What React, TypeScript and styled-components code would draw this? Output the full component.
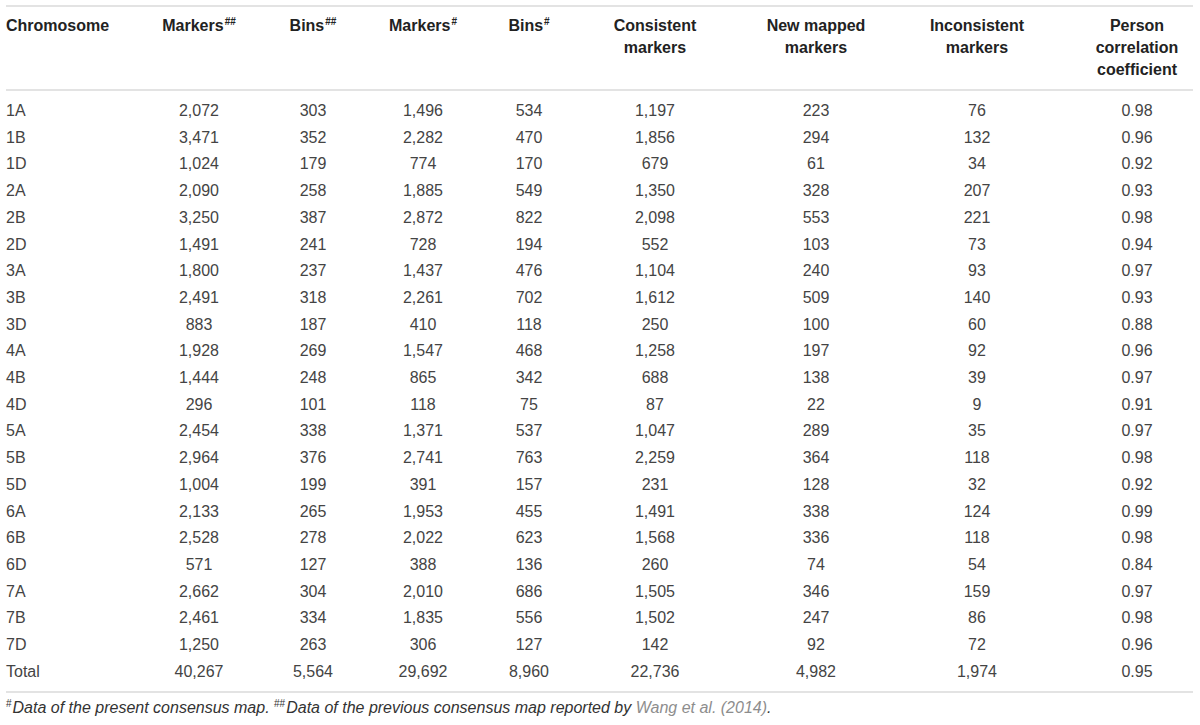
import React from "react";
import styled, { createGlobalStyle } from "styled-components";

const Global = createGlobalStyle`
  html, body { margin: 0; padding: 0; background: #ffffff; }
  body { font-family: "Liberation Sans", Arial, sans-serif; }
`;

const Page = styled.div`
  padding: 5px 7px 0 6px;
  width: 1187px;
`;

const Table = styled.table`
  width: 1187px;
  table-layout: fixed;
  border-collapse: collapse;
  border-top: 2px solid #e3e3e3;
  border-bottom: 2px solid #e3e3e3;
  font-size: 16px;
`;

const HeadRow = styled.tr`
  border-bottom: 2px solid #e3e3e3;
`;

const Th = styled.th<{ $left?: boolean }>`
  padding: 8px 0 8px;
  line-height: 22px;
  font-weight: bold;
  color: #222;
  vertical-align: top;
  white-space: nowrap;
  text-align: ${(p) => (p.$left ? "left" : "center")};
`;

const Sup = styled.sup`
  font-size: 10px;
  line-height: 0;
  vertical-align: 6px;
  margin-left: 1px;
`;

const Row = styled.tr<{ $first?: boolean; $last?: boolean }>`
  & > td {
    padding-top: ${(p) => (p.$first ? 11 : 4)}px;
    padding-bottom: ${(p) => (p.$last ? 10 : 4)}px;
  }
`;

const Td = styled.td<{ $left?: boolean }>`
  padding: 4px 0;
  line-height: 18.7px;
  color: #444;
  white-space: nowrap;
  text-align: ${(p) => (p.$left ? "left" : "center")};
`;

const Note = styled.p`
  margin: 5px 0 0;
  font-size: 16px;
  line-height: 20px;
  font-style: italic;
  color: #333;
`;

const NoteSup = styled.sup`
  font-size: 10px;
  line-height: 0;
  vertical-align: 6px;
  font-style: normal;
  margin-right: 1px;
`;

const Cite = styled.span`
  color: #8d8d8d;
`;

const widths = [105, 176, 52, 168, 44, 208, 114, 208, 112];

const rows: string[][] = [
  ["1A", "2,072", "303", "1,496", "534", "1,197", "223", "76", "0.98"],
  ["1B", "3,471", "352", "2,282", "470", "1,856", "294", "132", "0.96"],
  ["1D", "1,024", "179", "774", "170", "679", "61", "34", "0.92"],
  ["2A", "2,090", "258", "1,885", "549", "1,350", "328", "207", "0.93"],
  ["2B", "3,250", "387", "2,872", "822", "2,098", "553", "221", "0.98"],
  ["2D", "1,491", "241", "728", "194", "552", "103", "73", "0.94"],
  ["3A", "1,800", "237", "1,437", "476", "1,104", "240", "93", "0.97"],
  ["3B", "2,491", "318", "2,261", "702", "1,612", "509", "140", "0.93"],
  ["3D", "883", "187", "410", "118", "250", "100", "60", "0.88"],
  ["4A", "1,928", "269", "1,547", "468", "1,258", "197", "92", "0.96"],
  ["4B", "1,444", "248", "865", "342", "688", "138", "39", "0.97"],
  ["4D", "296", "101", "118", "75", "87", "22", "9", "0.91"],
  ["5A", "2,454", "338", "1,371", "537", "1,047", "289", "35", "0.97"],
  ["5B", "2,964", "376", "2,741", "763", "2,259", "364", "118", "0.98"],
  ["5D", "1,004", "199", "391", "157", "231", "128", "32", "0.92"],
  ["6A", "2,133", "265", "1,953", "455", "1,491", "338", "124", "0.99"],
  ["6B", "2,528", "278", "2,022", "623", "1,568", "336", "118", "0.98"],
  ["6D", "571", "127", "388", "136", "260", "74", "54", "0.84"],
  ["7A", "2,662", "304", "2,010", "686", "1,505", "346", "159", "0.97"],
  ["7B", "2,461", "334", "1,835", "556", "1,502", "247", "86", "0.98"],
  ["7D", "1,250", "263", "306", "127", "142", "92", "72", "0.96"],
  ["Total", "40,267", "5,564", "29,692", "8,960", "22,736", "4,982", "1,974", "0.95"],
];

export default function App() {
  return (
    <Page>
      <Global />
      <Table>
        <colgroup>
          {widths.map((w, i) => (
            <col key={i} style={{ width: w }} />
          ))}
        </colgroup>
        <thead>
          <HeadRow>
            <Th $left>Chromosome</Th>
            <Th>
              Markers<Sup>##</Sup>
            </Th>
            <Th>
              Bins<Sup>##</Sup>
            </Th>
            <Th>
              Markers<Sup>#</Sup>
            </Th>
            <Th>
              Bins<Sup>#</Sup>
            </Th>
            <Th>
              Consistent
              <br />
              markers
            </Th>
            <Th>
              New mapped
              <br />
              markers
            </Th>
            <Th>
              Inconsistent
              <br />
              markers
            </Th>
            <Th>
              Person
              <br />
              correlation
              <br />
              coefficient
            </Th>
          </HeadRow>
        </thead>
        <tbody>
          {rows.map((r, i) => (
            <Row key={r[0]} $first={i === 0} $last={i === rows.length - 1}>
              {r.map((c, j) => (
                <Td key={j} $left={j === 0}>
                  {c}
                </Td>
              ))}
            </Row>
          ))}
        </tbody>
      </Table>
      <Note>
        <NoteSup>#</NoteSup>Data of the present consensus map. <NoteSup>##</NoteSup>Data of the
        previous consensus map reported by <Cite>Wang et al. (2014)</Cite>.
      </Note>
    </Page>
  );
}
